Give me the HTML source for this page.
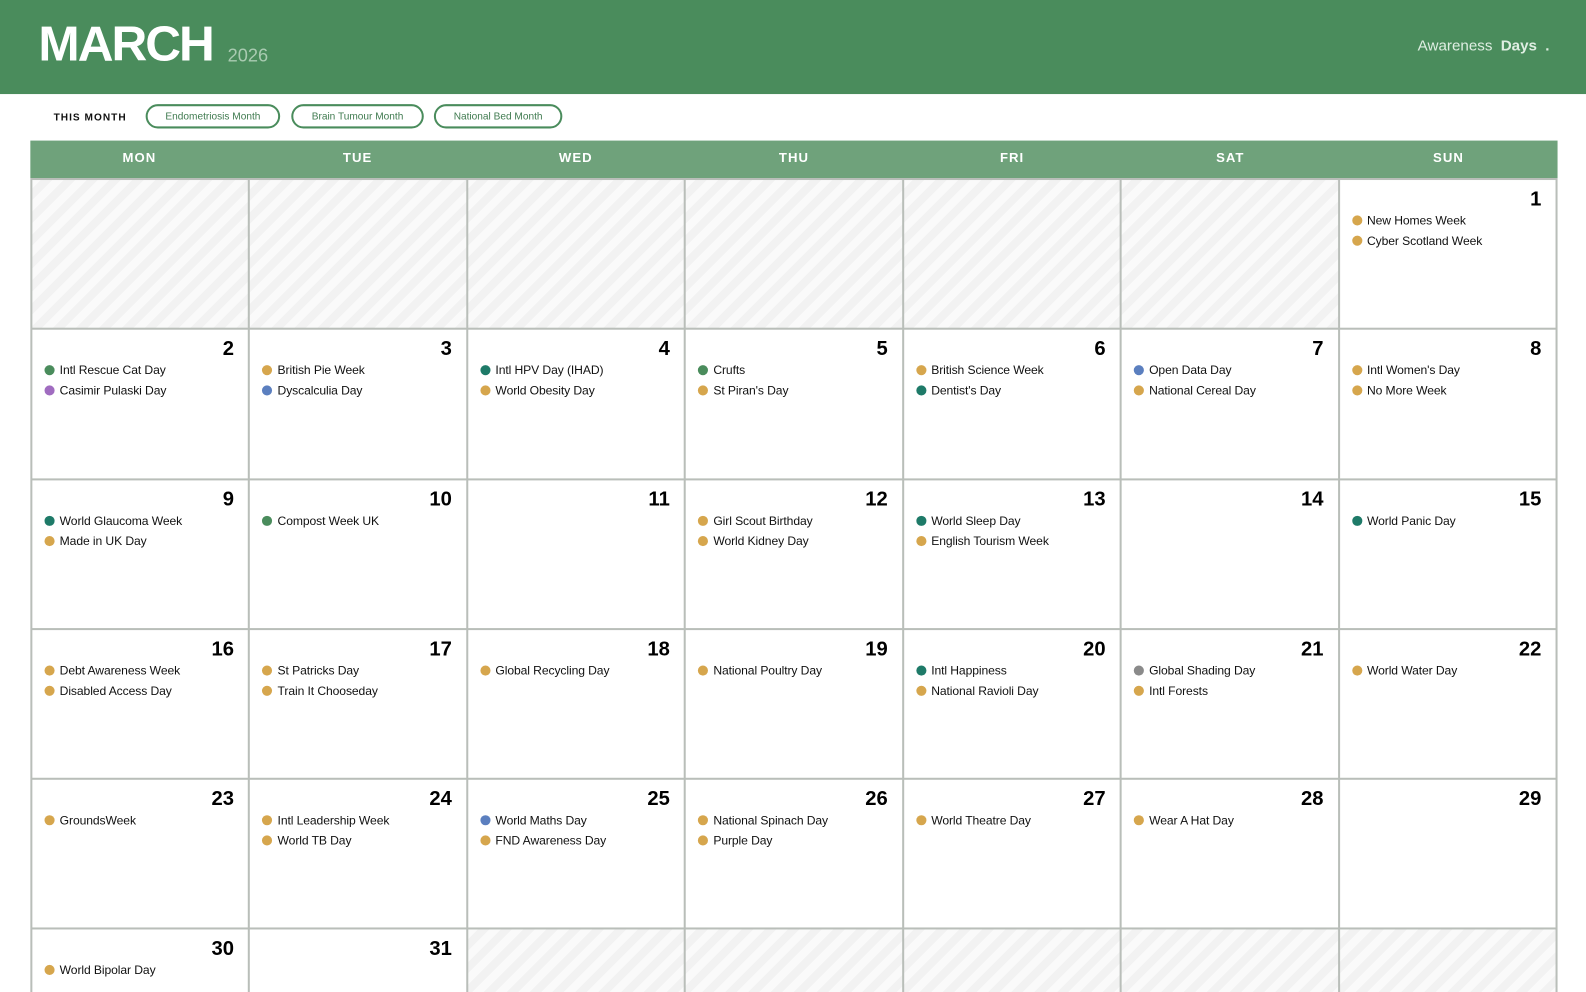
<!DOCTYPE html>
<html style="width:1586px;height:992px;overflow:hidden"><head><meta charset="utf-8"><style>
*{margin:0;padding:0;box-sizing:border-box}
body{width:1586px;height:992px;overflow:hidden;background:#fff;font-family:"Liberation Sans",Arial,sans-serif;position:relative}
#w{position:absolute;left:0;top:0;width:1586px;height:992px;transform:scale(1.0114);transform-origin:0 0}
.top{position:absolute;left:0;top:0;width:1586px;height:93px;background:#4a8c5c}
.m{position:absolute;left:38px;top:16px;font-size:49px;font-weight:bold;color:#fff;letter-spacing:-2px}
.y{position:absolute;left:225px;top:45px;font-size:18px;color:#a9cbb1}
.aw{position:absolute;right:54px;top:37px;font-size:15px;color:#dfeee2}
.aw b{margin-left:4px}
.tm{position:absolute;left:53px;top:111px;font-size:10px;font-weight:bold;letter-spacing:1px;color:#111}
.pill{position:absolute;top:103px;height:24px;border:2px solid #4a8c5c;border-radius:12px;font-size:10px;color:#3f7a4f;line-height:22px;text-align:center}
.hd{position:absolute;left:30px;top:139px;width:1510px;height:37px;background:#6fa27b;display:grid;grid-template-columns:repeat(7,1fr)}
.hd div{color:#fff;font-weight:bold;font-size:13px;letter-spacing:1px;text-align:center;line-height:34px}
.g{position:absolute;left:30px;top:176px;width:1510px;height:830px;overflow:hidden;background:#b9beb9;padding:2px;display:grid;grid-template-columns:repeat(7,1fr);grid-template-rows:repeat(6,146.3px);gap:2px}
.c{background:#fff;padding:7px 12px 0 12px;position:relative}
.e{background:repeating-linear-gradient(-45deg,#f2f2f2 0 8px,#fafafa 8px 16px)}
.n{text-align:right;font-size:20px;font-weight:bold;line-height:24px;height:23px;padding-right:2px;color:#000}
.ev{font-size:12px;line-height:20px;color:#111;white-space:nowrap;letter-spacing:-0.1px}
.ev i{display:inline-block;width:10px;height:10px;border-radius:50%;margin-right:5px;vertical-align:-1px}
.G{background:#4a8c5c}.Y{background:#d6a64d}.T{background:#1e7a68}.P{background:#a06cc0}.B{background:#5b7fbf}.R{background:#8a8a8a}
</style></head><body><div id="w">
<div class="top"><div class="m">MARCH</div><div class="y">2026</div><div class="aw">Awareness <b>Days</b> <b>.</b></div></div>
<div class="tm">THIS MONTH</div>
<div class="pill" style="left:144px;width:133px">Endometriosis Month</div>
<div class="pill" style="left:288px;width:131px">Brain Tumour Month</div>
<div class="pill" style="left:429px;width:127px">National Bed Month</div>
<div class="hd"><div>MON</div><div>TUE</div><div>WED</div><div>THU</div><div>FRI</div><div>SAT</div><div>SUN</div></div>
<div class="g">
<div class="c e"></div><div class="c e"></div><div class="c e"></div><div class="c e"></div><div class="c e"></div><div class="c e"></div>
<div class="c"><div class="n">1</div><div class="ev"><i class="Y"></i>New Homes Week</div><div class="ev"><i class="Y"></i>Cyber Scotland Week</div></div>

<div class="c"><div class="n">2</div><div class="ev"><i class="G"></i>Intl Rescue Cat Day</div><div class="ev"><i class="P"></i>Casimir Pulaski Day</div></div>
<div class="c"><div class="n">3</div><div class="ev"><i class="Y"></i>British Pie Week</div><div class="ev"><i class="B"></i>Dyscalculia Day</div></div>
<div class="c"><div class="n">4</div><div class="ev"><i class="T"></i>Intl HPV Day (IHAD)</div><div class="ev"><i class="Y"></i>World Obesity Day</div></div>
<div class="c"><div class="n">5</div><div class="ev"><i class="G"></i>Crufts</div><div class="ev"><i class="Y"></i>St Piran's Day</div></div>
<div class="c"><div class="n">6</div><div class="ev"><i class="Y"></i>British Science Week</div><div class="ev"><i class="T"></i>Dentist's Day</div></div>
<div class="c"><div class="n">7</div><div class="ev"><i class="B"></i>Open Data Day</div><div class="ev"><i class="Y"></i>National Cereal Day</div></div>
<div class="c"><div class="n">8</div><div class="ev"><i class="Y"></i>Intl Women's Day</div><div class="ev"><i class="Y"></i>No More Week</div></div>

<div class="c"><div class="n">9</div><div class="ev"><i class="T"></i>World Glaucoma Week</div><div class="ev"><i class="Y"></i>Made in UK Day</div></div>
<div class="c"><div class="n">10</div><div class="ev"><i class="G"></i>Compost Week UK</div></div>
<div class="c"><div class="n">11</div></div>
<div class="c"><div class="n">12</div><div class="ev"><i class="Y"></i>Girl Scout Birthday</div><div class="ev"><i class="Y"></i>World Kidney Day</div></div>
<div class="c"><div class="n">13</div><div class="ev"><i class="T"></i>World Sleep Day</div><div class="ev"><i class="Y"></i>English Tourism Week</div></div>
<div class="c"><div class="n">14</div></div>
<div class="c"><div class="n">15</div><div class="ev"><i class="T"></i>World Panic Day</div></div>

<div class="c"><div class="n">16</div><div class="ev"><i class="Y"></i>Debt Awareness Week</div><div class="ev"><i class="Y"></i>Disabled Access Day</div></div>
<div class="c"><div class="n">17</div><div class="ev"><i class="Y"></i>St Patricks Day</div><div class="ev"><i class="Y"></i>Train It Chooseday</div></div>
<div class="c"><div class="n">18</div><div class="ev"><i class="Y"></i>Global Recycling Day</div></div>
<div class="c"><div class="n">19</div><div class="ev"><i class="Y"></i>National Poultry Day</div></div>
<div class="c"><div class="n">20</div><div class="ev"><i class="T"></i>Intl Happiness</div><div class="ev"><i class="Y"></i>National Ravioli Day</div></div>
<div class="c"><div class="n">21</div><div class="ev"><i class="R"></i>Global Shading Day</div><div class="ev"><i class="Y"></i>Intl Forests</div></div>
<div class="c"><div class="n">22</div><div class="ev"><i class="Y"></i>World Water Day</div></div>

<div class="c"><div class="n">23</div><div class="ev"><i class="Y"></i>GroundsWeek</div></div>
<div class="c"><div class="n">24</div><div class="ev"><i class="Y"></i>Intl Leadership Week</div><div class="ev"><i class="Y"></i>World TB Day</div></div>
<div class="c"><div class="n">25</div><div class="ev"><i class="B"></i>World Maths Day</div><div class="ev"><i class="Y"></i>FND Awareness Day</div></div>
<div class="c"><div class="n">26</div><div class="ev"><i class="Y"></i>National Spinach Day</div><div class="ev"><i class="Y"></i>Purple Day</div></div>
<div class="c"><div class="n">27</div><div class="ev"><i class="Y"></i>World Theatre Day</div></div>
<div class="c"><div class="n">28</div><div class="ev"><i class="Y"></i>Wear A Hat Day</div></div>
<div class="c"><div class="n">29</div></div>

<div class="c"><div class="n">30</div><div class="ev"><i class="Y"></i>World Bipolar Day</div></div>
<div class="c"><div class="n">31</div></div>
<div class="c e"></div><div class="c e"></div><div class="c e"></div><div class="c e"></div><div class="c e"></div>
</div>
</div></body></html>
